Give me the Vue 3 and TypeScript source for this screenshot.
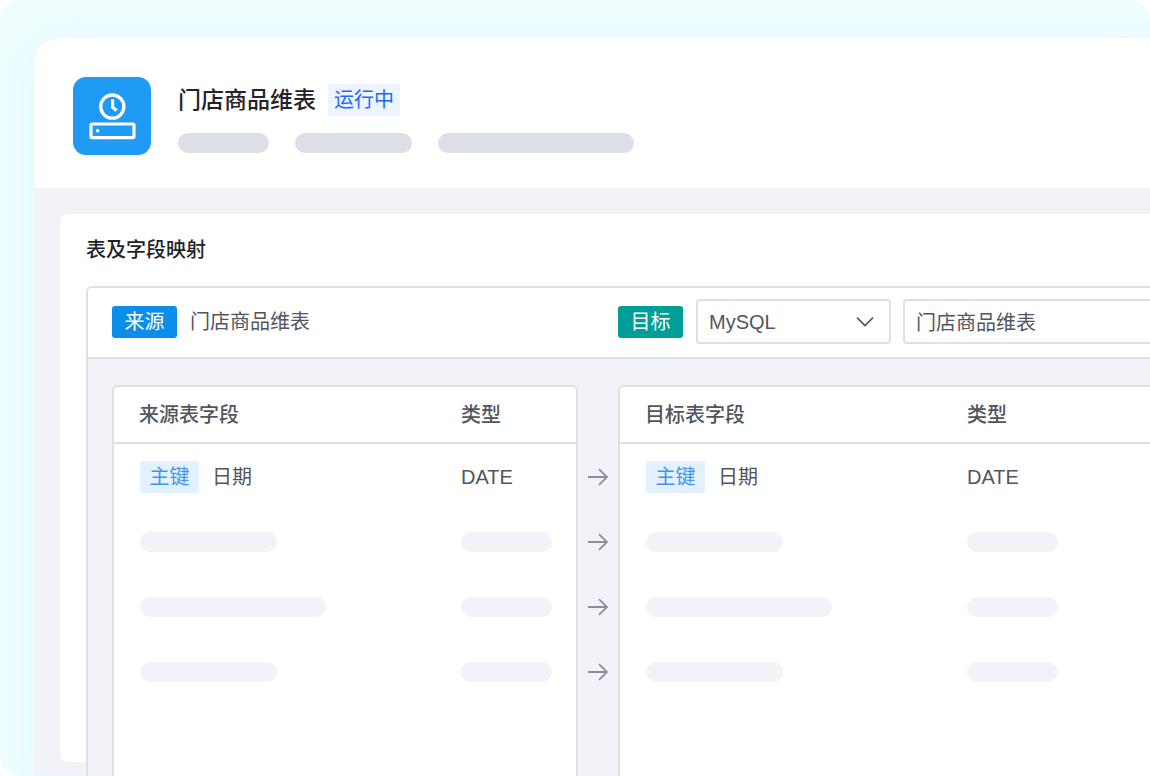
<script setup lang="ts">
import { ref } from 'vue'

interface FieldRow {
  name?: string
  type?: string
  size: 'short' | 'long'
}

interface FieldTable {
  id: string
  heading: string
}

const rows: FieldRow[] = [
  { name: '日期', type: 'DATE', size: 'short' },
  { size: 'short' },
  { size: 'long' },
  { size: 'short' },
]

const source: FieldTable = { id: 'source', heading: '来源表字段' }
const target: FieldTable = { id: 'target', heading: '目标表字段' }

const engine = ref('MySQL')
const targetName = ref('门店商品维表')
</script>

<template>
  <div class="stage">
    <main class="card">
      <header class="head">
        <svg class="logo" viewBox="0 0 78 78" aria-hidden="true">
          <rect width="78" height="78" rx="13" fill="#1f9af5" />
          <g fill="none" stroke="#fff" stroke-linejoin="round">
            <circle cx="39.3" cy="29.6" r="11.6" stroke-width="3.3" />
            <path d="M39.6 22.6V30.2L43.6 33.6" stroke-width="3.2" />
            <rect x="18" y="47" width="43" height="13.6" rx="1.4" stroke-width="3.2" />
          </g>
          <circle cx="24.6" cy="53.8" r="1.8" fill="#fff" />
        </svg>
        <div class="summary">
          <div class="title-row">
            <h1>门店商品维表</h1>
            <span class="status">运行中</span>
          </div>
          <div class="meta">
            <span class="bar bar-dark w-s"></span>
            <span class="bar bar-dark w-m"></span>
            <span class="bar bar-dark w-l"></span>
          </div>
        </div>
      </header>

      <div class="body">
        <section class="panel">
          <h2>表及字段映射</h2>
          <div class="mapping">
            <div class="bar-row columns">
              <div class="side">
                <span class="tag tag-source">来源</span>
                <span class="table-name">门店商品维表</span>
              </div>
              <div class="side side-target">
                <label class="tag tag-target" for="target-name">目标</label>
                <div class="selectors">
                  <div class="select-wrap">
                    <select v-model="engine" aria-label="目标">
                      <option>MySQL</option>
                    </select>
                    <svg class="chevron" viewBox="0 0 18 12" aria-hidden="true">
                      <path d="M1 1.6l8 8 8-8" fill="none" stroke="#51565d" stroke-width="1.6" />
                    </svg>
                  </div>
                  <input id="target-name" v-model="targetName" type="text" />
                </div>
              </div>
            </div>

            <div class="fields columns">
              <template v-for="t in [source, target]" :key="t.id">
                <div v-if="t.id === 'target'" class="arrows">
                  <span v-for="(r, i) in rows" :key="i" class="arrow">
                    <svg viewBox="0 0 20 18" aria-hidden="true">
                      <path
                        d="M0 9H19M11 1.2L19 9L11 16.8"
                        fill="none"
                        stroke="#8a909b"
                        stroke-width="1.8"
                      />
                    </svg>
                  </span>
                </div>
                <div class="table-box" :class="t.id">
                  <table>
                    <thead>
                      <tr>
                        <th class="col-name">{{ t.heading }}</th>
                        <th>类型</th>
                      </tr>
                    </thead>
                    <tbody>
                      <tr v-for="(r, i) in rows" :key="i">
                        <td>
                          <div class="cell">
                            <template v-if="r.name">
                              <span class="key">主键</span>
                              <span>{{ r.name }}</span>
                            </template>
                            <span v-else class="bar bar-light" :class="r.size"></span>
                          </div>
                        </td>
                        <td>
                          <template v-if="r.type">{{ r.type }}</template>
                          <div v-else class="bar bar-light w-s"></div>
                        </td>
                      </tr>
                    </tbody>
                  </table>
                </div>
              </template>
            </div>
          </div>
        </section>
      </div>
    </main>
  </div>
</template>

<style>
body {
  background: #fff;
}
</style>

<style scoped>
* {
  box-sizing: border-box;
}
.stage {
  height: 100vh;
  overflow: hidden;
  padding: 38px 0 1px 34px;
  border-radius: 20px 20px 0 20px;
  background: #effdff;
  color: #51565d;
  font-family: "Liberation Sans", "Noto Sans CJK SC", sans-serif;
  font-size: 20px;
  line-height: 28px;
}
.card {
  height: 100%;
  display: flex;
  flex-direction: column;
  border-top-left-radius: 26px;
  background: #fff;
  box-shadow: 0 10px 40px #dcf8ff;
}
.head {
  display: flex;
  gap: 27px;
  padding: 39px 39px 33px;
}
.logo {
  width: 78px;
  height: 78px;
  flex: none;
}
.summary {
  padding-top: 7px;
}
.title-row {
  display: flex;
  align-items: center;
  gap: 12px;
  margin-bottom: 17px;
}
h1 {
  margin: 0;
  font-size: 23px;
  line-height: 32px;
  font-weight: 500;
  color: #1f2429;
}
.status {
  padding: 0 6px;
  border-radius: 3px;
  background: #ebf4ff;
  color: #1f66ff;
  line-height: 32px;
}
.meta {
  display: flex;
  gap: 26px;
}
.bar {
  display: block;
  height: 20px;
  border-radius: 10px;
}
.bar-dark {
  background: #dcdfe5;
}
.bar-light {
  background: #f2f3f8;
}
.w-s {
  width: 91px;
}
.w-m {
  width: 117px;
}
.w-l {
  width: 196px;
}
.short {
  width: 137px;
}
.long {
  width: 186px;
}
.body {
  flex: 1;
  min-height: 0;
  display: flex;
  padding: 26px 0 13px 26px;
  background: #f2f3f8;
}
.panel {
  flex: 1;
  min-width: 0;
  display: flex;
  flex-direction: column;
  padding: 22px 0 0 26px;
  border-radius: 8px 0 0 8px;
  background: #fff;
}
h2 {
  margin: 0 0 22px;
  font-size: 20px;
  line-height: 28px;
  font-weight: 500;
  color: #1f2429;
}
.mapping {
  flex: 1;
  display: flex;
  flex-direction: column;
  margin-bottom: -20px;
  border: 2px solid #dde1e6;
  border-right: 0;
  border-bottom: 0;
  border-top-left-radius: 6px;
  background: #f2f3f8;
}
.columns {
  display: grid;
  grid-template-columns: minmax(0, 466fr) 40px minmax(0, 532fr);
  padding-left: 24px;
}
.bar-row {
  height: 71px;
  padding-bottom: 2px;
  border-bottom: 2px solid #dde1e6;
  border-top-left-radius: 4px;
  background: #fff;
}
.side {
  display: flex;
  align-items: center;
  gap: 13px;
}
.side-target {
  grid-column: 3;
}
.selectors {
  flex: 1;
  min-width: 0;
  display: flex;
  gap: 12px;
}
.tag {
  flex: none;
  width: 65px;
  border-radius: 3px;
  text-align: center;
  line-height: 32px;
  color: #fff;
}
.tag-source {
  background: #0d8dea;
}
.tag-target {
  background: #009e97;
}
.select-wrap {
  position: relative;
  flex: none;
  width: 195px;
}
select,
input {
  display: block;
  height: 45px;
  margin: 0;
  padding: 0 11px;
  border: 2px solid #dde1e6;
  border-radius: 4px;
  background: #fff;
  color: inherit;
  font: inherit;
  outline: 0;
}
select {
  width: 100%;
  appearance: none;
}
input {
  flex: 1;
  min-width: 0;
  border-right: 0;
  border-radius: 4px 0 0 4px;
}
.chevron {
  position: absolute;
  right: 17px;
  top: 17px;
  width: 18px;
  height: 12px;
  pointer-events: none;
}
.fields {
  flex: 1;
  padding-top: 26px;
}
.table-box {
  border: 2px solid #dde1e6;
  border-bottom: 0;
  border-radius: 6px 6px 0 0;
  background: #fff;
}
.table-box.target {
  border-right: 0;
  border-top-right-radius: 0;
}
table {
  width: 100%;
  table-layout: fixed;
  border-collapse: separate;
  border-spacing: 0;
}
th {
  height: 57px;
  padding: 0;
  border-bottom: 2px solid #dde1e6;
  text-align: left;
  font-weight: 500;
}
.col-name {
  width: 347px;
  padding-left: 25px;
}
td {
  height: 65px;
  padding: 0;
}
.cell {
  display: flex;
  align-items: center;
  gap: 13px;
  padding-left: 26px;
}
.key {
  width: 59px;
  border-radius: 3px;
  background: #e1f1ff;
  color: #4791eb;
  text-align: center;
  line-height: 32px;
}
.arrows {
  padding-top: 59px;
}
.arrow {
  display: flex;
  align-items: center;
  justify-content: center;
  height: 65px;
}
.arrow svg {
  width: 20px;
  height: 18px;
}
</style>
